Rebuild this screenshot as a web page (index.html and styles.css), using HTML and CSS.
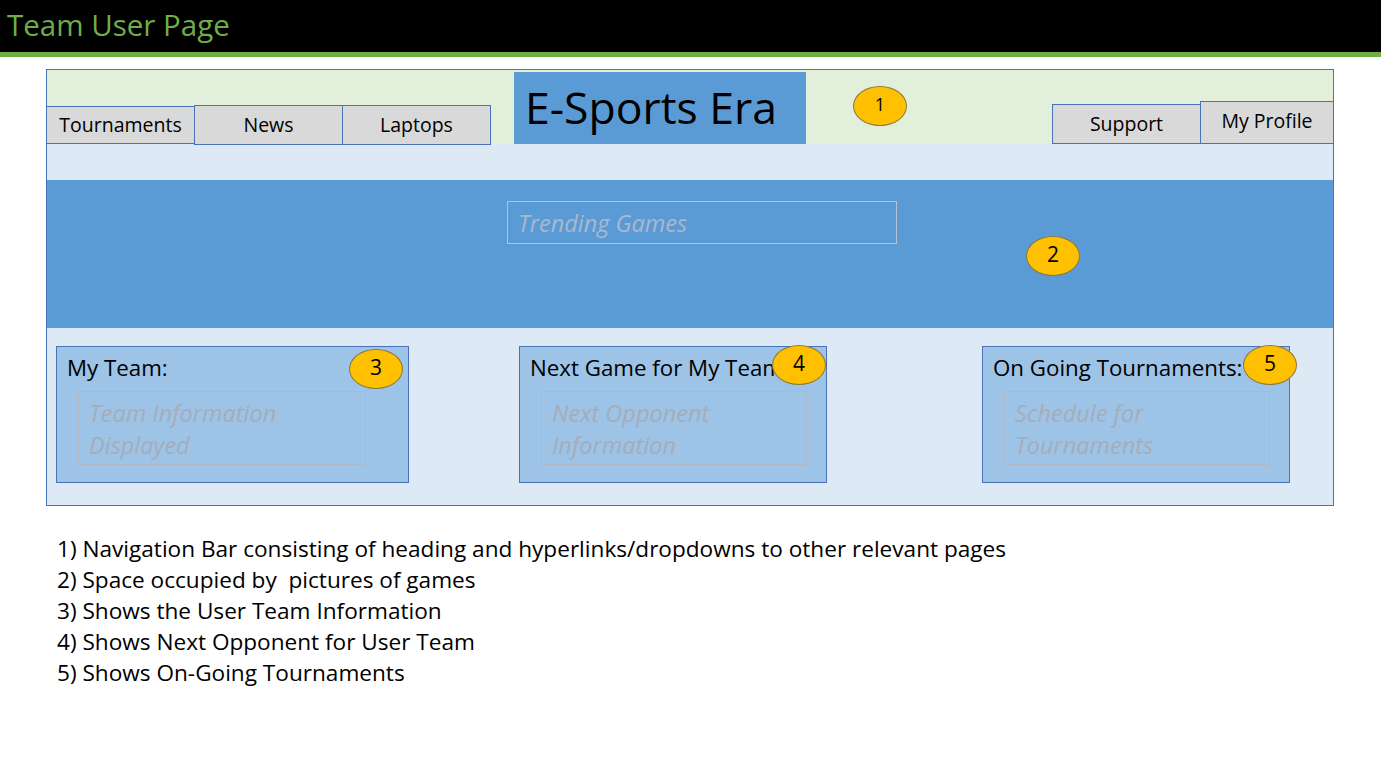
FILE: index.html
```
<!DOCTYPE html>
<html lang="en">
<head>
<meta charset="utf-8">
<title>Team User Page</title>
<link rel="stylesheet" href="styles.css">
</head>
<body>
<header class="slide-header">
  <h1 class="slide-title">Team User Page</h1>
</header>
<div class="green-rule"></div>

<main class="mockup">
  <nav class="nav">
    <div class="tabs tabs-left">
      <a class="tab tab-tournaments">Tournaments</a>
      <a class="tab tab-news">News</a>
      <a class="tab tab-laptops">Laptops</a>
    </div>
    <div class="brand">E-Sports Era</div>
    <div class="badge-slot badge-slot-1"><span class="badge">1</span></div>
    <div class="tabs tabs-right">
      <a class="tab tab-support">Support</a>
      <a class="tab tab-profile">My Profile</a>
    </div>
  </nav>
  <div class="subband"></div>
  <section class="banner">
    <div class="trending">Trending Games</div>
    <span class="badge badge-2">2</span>
  </section>
  <section class="content">
    <div class="card card-team">
      <h2 class="card-title">My Team:</h2>
      <div class="card-inner">Team Information<br>Displayed</div>
      <span class="badge badge-3">3</span>
    </div>
    <div class="card card-next">
      <h2 class="card-title">Next Game for My Team</h2>
      <div class="card-inner">Next Opponent<br>Information</div>
      <span class="badge badge-4">4</span>
    </div>
    <div class="card card-ongoing">
      <h2 class="card-title">On Going Tournaments:</h2>
      <div class="card-inner">Schedule for<br>Tournaments</div>
      <span class="badge badge-5">5</span>
    </div>
  </section>
</main>

<ol class="notes">
  <li>1) Navigation Bar consisting of heading and hyperlinks/dropdowns to other relevant pages</li>
  <li>2) Space occupied by&nbsp; pictures of games</li>
  <li>3) Shows the User Team Information</li>
  <li>4) Shows Next Opponent for User Team</li>
  <li>5) Shows On-Going Tournaments</li>
</ol>
</body>
</html>
```

FILE: styles.css
```
* { box-sizing: border-box; }

html, body {
  margin: 0;
  padding: 0;
  background: #ffffff;
  font-family: "Open Sans", Lato, sans-serif;
  color: #000;
}

.slide-header {
  background: #000;
  height: 52px;
  display: flex;
  align-items: center;
  padding-left: 7px;
}

.slide-title {
  margin: 0;
  font-weight: 400;
  font-size: 29.5px;
  color: #70ad47;
  line-height: 1;
  padding-bottom: 2px;
}

.green-rule {
  height: 5px;
  background: #70ad47;
}

.mockup {
  margin: 12px 0 0 46px;
  width: 1288px;
  border: 1px solid #4a72b8;
  background: #dee9f6;
}

/* Navigation */
.nav {
  height: 74px;
  background: #e2efda;
  display: flex;
  align-items: flex-end;
}

.tabs {
  display: flex;
  align-items: flex-end;
}

.tab {
  background: #d9d9d9;
  border: 1px solid #4a72b8;
  font-size: 19.5px;
  display: flex;
  align-items: center;
  justify-content: center;
  color: #000;
  padding-bottom: 1px;
}

.tab-tournaments { width: 148px; height: 38px; border-left: none; }
.tab-news { width: 149px; height: 40px; margin-left: -1px; margin-bottom: -1px; }
.tab-laptops { width: 149px; height: 40px; margin-left: -1px; margin-bottom: -1px; }

.brand {
  margin-left: 23px;
  width: 292px;
  height: 72px;
  background: #5b9bd5;
  font-size: 44.5px;
  display: flex;
  align-items: center;
  padding-left: 11px;
  padding-bottom: 4px;
}

.badge-slot-1 {
  align-self: stretch;
  padding: 16px 0 0 47px;
}

.tabs-right {
  margin-left: auto;
}

.tab-support { width: 149px; height: 40px; }
.tab-profile { width: 133px; height: 43px; margin-left: -1px; border-right: none; align-items: flex-start; padding-top: 5px; }

.badge {
  display: flex;
  align-items: center;
  justify-content: center;
  width: 54px;
  height: 40px;
  border-radius: 50%;
  background: #ffc000;
  border: 1px solid #8a7a3a;
  font-size: 21px;
  color: #000;
  padding-bottom: 4px;
}

.badge-slot-1 .badge { font-size: 18px; padding-bottom: 5px; }

.subband {
  height: 36px;
}

/* Banner */
.banner {
  position: relative;
  height: 148px;
  background: #5b9bd5;
  padding: 21px 0 0 460px;
}

.trending {
  width: 390px;
  height: 43px;
  border: 1px solid #b3c3d6;
  color: #a9b8cc;
  font-style: italic;
  font-size: 23.5px;
  display: flex;
  align-items: center;
  padding-left: 10px;
}

.badge-2 {
  position: absolute;
  left: 979px;
  top: 56px;
}

/* Content */
.content {
  height: 177px;
  display: flex;
  align-items: flex-start;
  padding: 18px 0 0 9px;
}

.card {
  position: relative;
  height: 137px;
  background: #9dc3e6;
  border: 1px solid #4a72b8;
  padding: 7px 0 0 10px;
}

.card-team { width: 353px; }
.card-next { width: 308px; margin-left: 110px; }
.card-ongoing { width: 308px; margin-left: 155px; }

.card-title {
  margin: 0;
  font-weight: 400;
  font-size: 22.3px;
  line-height: 28px;
  white-space: nowrap;
}

.card-inner {
  margin: 9px 0 0 11px;
  width: 288px;
  height: 74px;
  border: 1px solid #b0b8c4;
  color: #a5adb8;
  font-style: italic;
  font-size: 23.5px;
  line-height: 32px;
  padding: 5px 0 0 10px;
}

.card-next .card-inner,
.card-ongoing .card-inner { width: 266px; }

.badge-3 { position: absolute; left: 292px; top: 2px; }
.badge-4 { position: absolute; left: 252px; top: -2px; }
.badge-5 { position: absolute; left: 260px; top: -2px; }

/* Notes */
.notes {
  list-style: none;
  margin: 27px 0 0 57px;
  padding: 0;
  font-size: 22.6px;
  line-height: 31px;
}
```
